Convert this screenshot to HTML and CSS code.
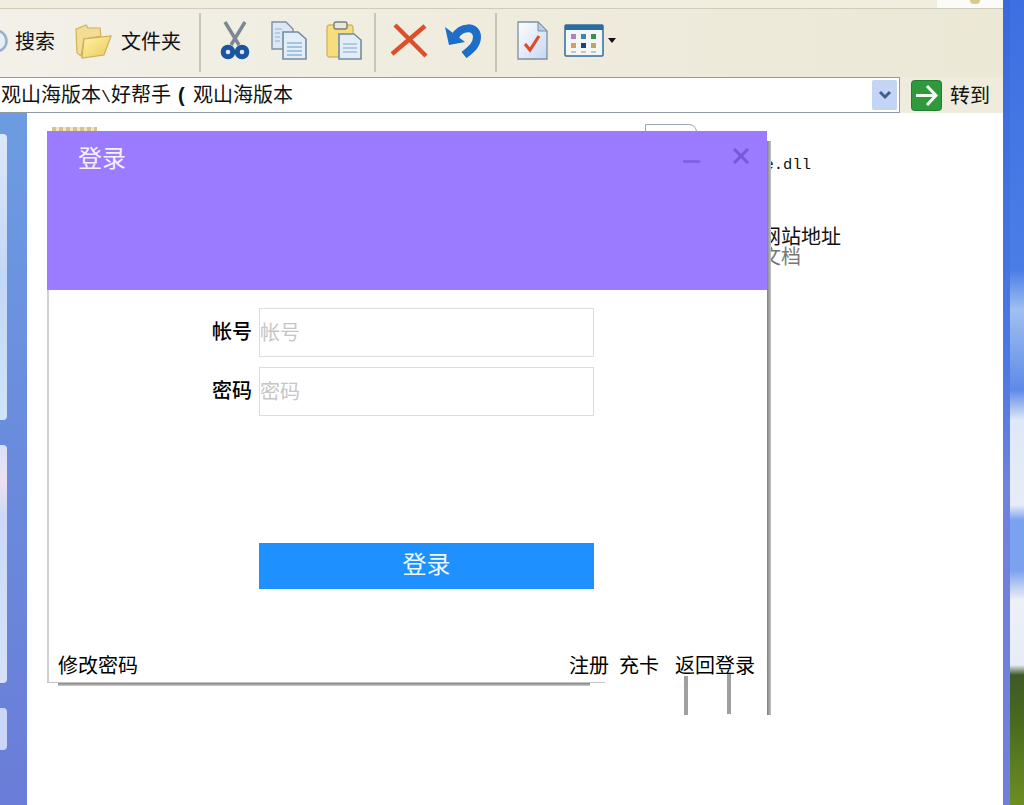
FILE: index.html
```html
<!DOCTYPE html>
<html lang="zh-CN">
<head>
<meta charset="utf-8">
<title>登录</title>
<link rel="stylesheet" href="styles.css">
</head>
<body>
<div class="screen">
  <div class="explorer">
    <div class="menubar"><div class="menu-logo"><span class="flag"></span></div></div>
    <div class="toolbar">
      <svg class="i-search" width="8" height="26" viewBox="0 0 8 26"><circle cx="-4" cy="13" r="10.5" fill="#e6eef8" stroke="#9aafc8" stroke-width="2.5"/></svg>
      <span class="tool-text t-search">搜索</span>
      <svg class="i-folder" width="38" height="36" viewBox="0 0 38 36">
        <defs><linearGradient id="fy" x1="0" y1="0" x2="1" y2="1"><stop offset="0" stop-color="#fff3a8"/><stop offset="1" stop-color="#eec95a"/></linearGradient></defs>
        <path d="M2 6 L12 2 L14 5 L26 5 L27 13 L10 16 L7 33 L3 30 Z" fill="#f3dc94" stroke="#d2b25c" stroke-width="1.2"/>
        <path d="M10 16 L37 13 L30 32 L8 35 Z" fill="url(#fy)" stroke="#cfae57" stroke-width="1.2"/>
      </svg>
      <span class="tool-text t-folder">文件夹</span>
      <span class="sep s1"></span>
      <svg class="i-cut" width="30" height="39" viewBox="0 0 30 39">
        <path d="M5 1 L19 24 M25 1 L11 24" stroke="#7c8794" stroke-width="3.4" fill="none"/>
        <circle cx="8" cy="31" r="4.8" fill="#dfe6ee" stroke="#1b559f" stroke-width="5"/>
        <circle cx="22" cy="31" r="4.8" fill="#dfe6ee" stroke="#1b559f" stroke-width="5"/>
      </svg>
      <svg class="i-copy" width="36" height="39" viewBox="0 0 36 39">
        <path d="M1 1 H15 L22 8 V28 H1 Z" fill="#dbe7f4" stroke="#7f90a6" stroke-width="1.4"/>
        <path d="M12 11 H27 L35 18 V38 H12 Z" fill="#e2edf7" stroke="#748aa3" stroke-width="1.6"/>
        <path d="M16 22 H31 M16 26 H31 M16 30 H31 M16 34 H31" stroke="#8fb6d6" stroke-width="1.6"/>
        <path d="M4 8 H11 M4 12 H9 M4 16 H9 M4 20 H9" stroke="#a9c4dd" stroke-width="1.5"/>
      </svg>
      <svg class="i-paste" width="36" height="39" viewBox="0 0 36 39">
        <rect x="1" y="4" width="26" height="32" rx="3" fill="#f8dd7e" stroke="#d4b765" stroke-width="1.4"/>
        <rect x="8" y="1" width="13" height="7" rx="2" fill="#e8e8e2" stroke="#7d7d72" stroke-width="1.4"/>
        <path d="M13 13 H28 L35 19 V38 H13 Z" fill="#e2edf7" stroke="#748aa3" stroke-width="1.6"/>
        <path d="M17 23 H31 M17 27 H31 M17 31 H31" stroke="#9fbfda" stroke-width="1.6"/>
      </svg>
      <span class="sep s2"></span>
      <svg class="i-del" width="38" height="36" viewBox="0 0 38 36"><path d="M2 32 L35 4 M5 3 L36 34" stroke="#dc4f2a" stroke-width="4.4" fill="none"/></svg>
      <svg class="i-undo" width="37" height="36" viewBox="0 0 37 36">
        <path d="M11 15 C16 4 33 3 33 15 C33 24 25 29 20 33" fill="none" stroke="#1d6ec8" stroke-width="8"/>
        <path d="M1 5 L5 23 L21 20 Z" fill="#1d6ec8"/>
      </svg>
      <span class="sep s3"></span>
      <svg class="i-doc" width="31" height="39" viewBox="0 0 31 39">
        <defs><linearGradient id="fd" x1="0" y1="0" x2="1" y2="1"><stop offset="0" stop-color="#fdfefe"/><stop offset="1" stop-color="#c6d8f0"/></linearGradient></defs>
        <path d="M1 1 H21 L30 10 V38 H1 Z" fill="url(#fd)" stroke="#7c8ea6" stroke-width="1.3"/>
        <path d="M21 1 V10 H30 Z" fill="#b8cfe8" stroke="#7c8ea6"/>
        <path d="M8 23 L13 29 L22 15" fill="none" stroke="#de4b2b" stroke-width="3.2"/>
      </svg>
      <svg class="i-view" width="40" height="33" viewBox="0 0 40 33">
        <rect x="1" y="1" width="38" height="31" rx="1" fill="#f4f6f4" stroke="#2f6c9e" stroke-width="1.5"/>
        <rect x="1" y="1" width="38" height="5" fill="#2f6c9e"/>
        <rect x="7" y="10" width="5" height="5" fill="#a886c0"/><rect x="17" y="10" width="5" height="5" fill="#3a84b8"/><rect x="27" y="10" width="5" height="5" fill="#3d8c4e"/>
        <rect x="7" y="19" width="5" height="5" fill="#d89a68"/><rect x="17" y="19" width="5" height="5" fill="#1d3f86"/><rect x="27" y="19" width="5" height="5" fill="#b8ab5a"/>
        <path d="M7 28 H12 M17 28 H22 M27 28 H32" stroke="#8a9aa8"/>
      </svg>
      <span class="caret"></span>
    </div>
    <div class="addressbar">
      <div class="address">
        <span class="address-text">观山海版本<span class="slash">\</span>好帮手<span class="paren">(</span>观山海版本</span>
        <span class="combo"><svg width="14" height="10" viewBox="0 0 14 10"><path d="M2 2 L7 7 L12 2" fill="none" stroke="#3f5f92" stroke-width="3"/></svg></span>
      </div>
      <svg class="i-go" width="31" height="31" viewBox="0 0 31 31">
        <rect x="0.5" y="0.5" width="30" height="30" rx="3" fill="#2f9a3c" stroke="#237a30"/>
        <path d="M5 15.5 H24 M16 6 L25 15.5 L16 25" fill="none" stroke="#f2fff2" stroke-width="3"/>
      </svg>
      <span class="go-text">转到</span>
    </div>
    <div class="main">
      <aside class="sidebar">
        <div class="panel p1"></div>
        <div class="panel p2"></div>
        <div class="panel p3"></div>
      </aside>
      <section class="content">
        <div class="peek"></div>
        <div class="files">
          <div class="file">
            <div class="file-icon"></div>
            <div class="file-name mono">e.dll</div>
          </div>
          <div class="site">
            <div>网站地址</div>
            <div class="muted">文档</div>
          </div>
        </div>
      </section>
    </div>
  </div>
  <div class="edge"></div>
  <div class="wallpaper"></div>

  <div class="dialog">
    <header class="dialog-head">
      <h1 class="dialog-title">登录</h1>
      <div class="win-btns">
        <svg width="17" height="16" viewBox="0 0 17 16"><path d="M0 13.5 H17" stroke="#7d5fe0" stroke-width="2.5"/></svg>
        <svg class="win-close" width="16" height="16" viewBox="0 0 16 16"><path d="M1 1 L15 15 M15 1 L1 15" stroke="#7658d8" stroke-width="3"/></svg>
      </div>
    </header>
    <form class="dialog-form">
      <label class="field-label">帐号</label>
      <input class="field" type="text" placeholder="帐号">
      <label class="field-label">密码</label>
      <input class="field" type="text" placeholder="密码">
      <button class="submit" type="button">登录</button>
    </form>
    <footer class="dialog-foot">
      <a class="link">修改密码</a>
      <span class="foot-right">
        <a class="link">注册</a>
        <a class="link l-card">充卡</a>
        <a class="link l-back">返回登录</a>
      </span>
    </footer>
    <span class="ghost g-right"></span>
    <span class="ghost g-a"></span>
    <span class="ghost g-b"></span>
    <span class="ghost g-line"></span>
    <span class="ghost g-bottom"></span>
  </div>
</div>
</body>
</html>
```

FILE: styles.css
```css
* { box-sizing: border-box; }
html, body { margin: 0; padding: 0; }
body {
  width: 1024px;
  height: 805px;
  overflow: hidden;
  font-family: "Noto Sans CJK SC", "Liberation Sans", sans-serif;
  font-size: 20px;
  color: #111;
  background: #fff;
}
.screen { position: relative; display: flex; width: 1024px; height: 805px; overflow: hidden; }
.explorer { width: 1003px; height: 805px; display: flex; flex-direction: column; }
.edge { width: 7px; background: linear-gradient(180deg, #3a69de 0, #4a78e4 45%, #6f82de 60%, #6f7fdc 100%); }
.wallpaper {
  width: 14px;
  background: linear-gradient(180deg, #3e6fe2 0, #4a7ee6 270px, #9fc0f0 310px, #5f8ae8 390px, #dfe8f6 420px, #e6edf8 505px, #7ba2ee 520px, #7ba2ee 570px, #eef0f6 600px, #e6ecf6 665px, #3d5a26 675px, #48691f 720px, #6b8f22 805px);
}

.menubar { height: 9px; background: #f1eee0; border-bottom: 1px solid #cfccbc; display: flex; justify-content: flex-end; flex: none; }
.menu-logo { width: 66px; background: #fbfbf8; }
.flag { display: block; width: 10px; height: 4px; margin-left: 33px; border-radius: 0 0 5px 5px; background: #d8c98c; }

.toolbar {
  height: 68px;
  flex: none;
  display: flex;
  align-items: center;
  background: linear-gradient(90deg, #f2f0e8, #efecde 50%, #ece8d6);
}
.tool-text { line-height: 26px; margin-top: -4px; }
.i-search { flex: none; margin-top: -4px; }
.t-search { margin-left: 7px; }
.i-folder { margin-left: 19px; margin-top: -4px; }
.t-folder { margin-left: 9px; }
.sep { width: 2px; height: 59px; background: #c9c6b6; margin-top: -1px; }
.s1 { margin-left: 18px; }
.i-cut { margin-left: 19px; margin-top: -6px; }
.i-copy { margin-left: 21px; margin-top: -6px; }
.i-paste { margin-left: 19px; margin-top: -6px; }
.s2 { margin-left: 12px; }
.i-del { margin-left: 14px; margin-top: -6px; }
.i-undo { margin-left: 16px; margin-top: -6px; }
.s3 { margin-left: 14px; }
.i-doc { margin-left: 20px; margin-top: -6px; }
.i-view { margin-left: 16px; margin-top: -6px; }
.caret { width: 0; height: 0; margin-left: 4px; margin-top: -6px; border: 4.5px solid transparent; border-top: 5px solid #111; border-bottom: 0; }

.addressbar {
  height: 36px;
  flex: none;
  display: flex;
  align-items: center;
  background: #efecde;
}
.address {
  width: 900px;
  height: 36px;
  background: #fff;
  border: 1px solid #8f9aa6;
  border-left: 0;
  display: flex;
  align-items: center;
  justify-content: space-between;
  padding: 0 2px 0 1px;
}
.address-text { line-height: 26px; white-space: pre; padding-top: 2px; }
.slash { display: inline-block; width: 10px; font-family: "Liberation Mono", monospace; font-size: 16.67px; }
.paren { display: inline-block; width: 22px; padding-left: 7px; font-weight: 700; font-family: "Liberation Sans", sans-serif; }
.combo { width: 25px; height: 30px; background: #c4d4f4; border-radius: 2px; display: flex; align-items: center; justify-content: center; }
.i-go { margin-left: 11px; flex: none; }
.go-text { margin-left: 8px; line-height: 26px; }

.main { flex: 1; display: flex; min-height: 0; }
.sidebar {
  width: 27px;
  flex: none;
  background: linear-gradient(180deg, #6d9ce2 0, #6a8ede 40%, #6a7dd8 100%);
  display: flex;
  flex-direction: column;
  padding-top: 21px;
  gap: 25px;
}
.panel { width: 7px; border-radius: 0 4px 4px 0; }
.p1 { height: 286px; background: linear-gradient(180deg, #dce7f8, #c3d7f6 50%, #cfe4f8); }
.p2 { height: 238px; background: linear-gradient(180deg, #d8e2fa, #ece0f2 15%, #cdd9f6 30%, #d6e0f8); }
.p3 { height: 42px; background: #c9d6f8; }
.content { flex: 1; background: #fff; display: flex; }
.peek { width: 45px; height: 5px; margin: 14px 0 0 25px; background: repeating-linear-gradient(90deg, #d8c28a 0 4px, #f1e6c4 4px 7px); }
.files { margin-left: 548px; padding-top: 11px; }
.file { display: flex; height: 60px; }
.file-icon { width: 52px; height: 30px; background: #fff; border: 1px solid #9ea7b4; border-radius: 0 8px 0 0; flex: none; }
.file-name { margin: 17px 0 0 67.5px; line-height: 22px; }
.mono { font-family: "Liberation Mono", monospace; font-size: 15.5px; padding-top: 13px; }
.site { margin: 42px 0 0 116px; line-height: 20px; }
.muted { color: #777; }

.dialog {
  position: absolute;
  left: 47px;
  top: 131px;
  width: 720px;
  height: 552px;
  background: #fff;
  border-left: 2px solid #cfd0d2;
  display: flex;
  flex-direction: column;
}
.dialog-head {
  height: 159px;
  flex: none;
  margin-left: -2px;
  background: #9b7bff;
  display: flex;
  justify-content: space-between;
  padding: 11px 18px 0 31px;
}
.dialog-title { margin: 0; font-size: 24px; font-weight: 400; line-height: 30px; color: #f7f2ff; }
.win-btns { display: flex; gap: 33px; padding-top: 6px; align-items: flex-start; }
.dialog-form {
  display: grid;
  grid-template-columns: 203px 335px;
  column-gap: 7px;
  row-gap: 10px;
  padding-top: 18px;
}
.field-label { text-align: right; align-self: center; line-height: 26px; color: #000; padding-bottom: 3px; font-weight: 500; }
.field {
  height: 49px;
  padding: 0 0 3px;
  border: 1px solid #dcdcdc;
  background: #fff;
  font: inherit;
  color: #333;
}
.field::placeholder { color: #c6c6c6; opacity: 1; }
.submit {
  grid-column: 2;
  height: 46px;
  margin-top: 117px;
  border: 0;
  background: #1e90ff;
  color: #eafaff;
  font: inherit;
  font-size: 24px;
  padding: 0 0 7px;
}
.dialog-foot {
  margin-top: auto;
  display: flex;
  justify-content: space-between;
  padding: 0 12px 5px 9px;
  line-height: 26px;
  color: #000;
}
.foot-right { display: flex; }
.l-card { margin-left: 10px; }
.l-back { margin-left: 16px; }

.ghost { position: absolute; filter: blur(0.7px); }
.g-right { left: 718px; top: 10px; width: 4px; height: 574px; background: linear-gradient(90deg, #7f7f7f, #c4c4c4); }
.g-a { left: 635px; top: 545px; width: 4px; height: 39px; background: #a0a0a0; }
.g-b { left: 678px; top: 543px; width: 4px; height: 40px; background: #a0a0a0; }
.g-line { left: -2px; top: 551px; width: 558px; height: 1px; background: #c4c4c4; }
.g-bottom { left: 9px; top: 552px; width: 532px; height: 3px; background: linear-gradient(180deg, #7f7f7f, #cfcfcf); }
```
